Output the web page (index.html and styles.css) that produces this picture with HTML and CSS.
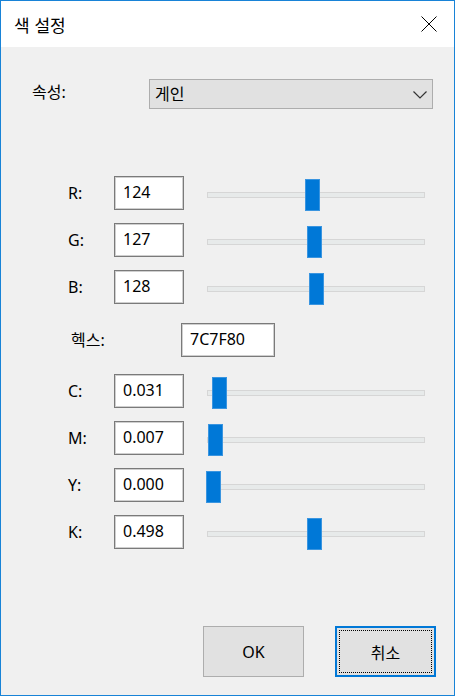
FILE: index.html
```html
<!DOCTYPE html>
<html lang="ko">
<head>
    <meta charset="UTF-8">
    <title>색 설정</title>
    <link rel="stylesheet" href="styles.css">
</head>
<body>
    <div class="dialog">
        <div class="titlebar">
            <span class="title">색 설정</span>
            <svg class="close" width="16" height="16" viewBox="0 0 16 16">
                <path d="M0.5 0.5 L15.5 15.5 M15.5 0.5 L0.5 15.5" stroke="#000" stroke-width="1" fill="none"/>
            </svg>
        </div>
        <div class="content">
            <div class="property-row">
                <label class="property-label">속성:</label>
                <div class="combo">
                    <span>게인</span>
                    <svg class="chevron" width="14" height="8" viewBox="0 0 14 8">
                        <path d="M0.5 0.5 L7 7 L13.5 0.5" stroke="#333" stroke-width="1.2" fill="none"/>
                    </svg>
                </div>
            </div>

            <div class="channels">
                <div class="row">
                    <label class="ch-label">R:</label>
                    <input class="field" type="text" value="124" readonly>
                    <div class="slider"><div class="track"></div><div class="thumb" style="left: 99px"></div></div>
                </div>
                <div class="row">
                    <label class="ch-label">G:</label>
                    <input class="field" type="text" value="127" readonly>
                    <div class="slider"><div class="track"></div><div class="thumb" style="left: 101px"></div></div>
                </div>
                <div class="row">
                    <label class="ch-label">B:</label>
                    <input class="field" type="text" value="128" readonly>
                    <div class="slider"><div class="track"></div><div class="thumb" style="left: 103px"></div></div>
                </div>

                <div class="row hex-row">
                    <label class="hex-label">헥스:</label>
                    <input class="field hex-field" type="text" value="7C7F80" readonly>
                </div>

                <div class="row cmyk-first">
                    <label class="ch-label">C:</label>
                    <input class="field" type="text" value="0.031" readonly>
                    <div class="slider"><div class="track"></div><div class="thumb" style="left: 6px"></div></div>
                </div>
                <div class="row">
                    <label class="ch-label">M:</label>
                    <input class="field" type="text" value="0.007" readonly>
                    <div class="slider"><div class="track"></div><div class="thumb" style="left: 2px"></div></div>
                </div>
                <div class="row">
                    <label class="ch-label">Y:</label>
                    <input class="field" type="text" value="0.000" readonly>
                    <div class="slider"><div class="track"></div><div class="thumb" style="left: 0px"></div></div>
                </div>
                <div class="row">
                    <label class="ch-label">K:</label>
                    <input class="field" type="text" value="0.498" readonly>
                    <div class="slider"><div class="track"></div><div class="thumb" style="left: 101px"></div></div>
                </div>
            </div>

            <div class="buttons">
                <button class="btn">OK</button>
                <button class="btn btn-focus"><span class="focus-rect">취소</span></button>
            </div>
        </div>
    </div>
</body>
</html>
```

FILE: styles.css
```css
body {
    margin: 0;
    font-family: "Noto Sans", "Noto Sans CJK KR", sans-serif;
    font-size: 16px;
    color: #000;
}
.dialog {
    box-sizing: border-box;
    width: 455px;
    height: 696px;
    border: 1px solid #1883d7;
    display: flex;
    flex-direction: column;
}
.titlebar {
    height: 46px;
    background: #fff;
    display: flex;
    align-items: center;
    justify-content: space-between;
    padding-left: 13px;
    padding-right: 17px;
}
.title {
    font-family: "Noto Sans CJK KR", sans-serif;
    font-size: 17px;
    line-height: 1;
}
.close {
    display: block;
}
.content {
    flex: 1;
    background: #f0f0f0;
    display: flex;
    flex-direction: column;
    padding-top: 32px;
}
.property-row {
    display: flex;
    align-items: flex-start;
    margin-left: 31px;
}
.property-label {
    width: 117px;
    padding-top: 3px;
    line-height: 20px;
}
.combo {
    box-sizing: border-box;
    width: 284px;
    height: 30px;
    background: #e1e1e1;
    border: 1px solid #adadad;
    display: flex;
    align-items: center;
    justify-content: space-between;
    padding-left: 5px;
    padding-right: 5px;
    line-height: 1;
}
.chevron {
    display: block;
    margin-top: 1px;
}
.channels {
    margin-left: 67px;
    margin-top: 67px;
}
.row {
    display: flex;
    align-items: center;
    height: 34px;
    margin-top: 13px;
}
.row:first-child {
    margin-top: 0;
}
.hex-row {
    margin-top: 19px;
}
.cmyk-first {
    margin-top: 17px;
}
.ch-label {
    width: 46px;
    line-height: 1;
}
.hex-label {
    width: 110px;
    padding-left: 3px;
    line-height: 1;
}
.field {
    box-sizing: border-box;
    width: 70px;
    height: 34px;
    margin: 0;
    border: 1px solid #7a7a7a;
    box-shadow: inset 0 0 0 1px #cfcfcf;
    background: #fff;
    font-family: inherit;
    font-size: 16px;
    color: #000;
    padding: 0 0 3px 8px;
    outline: none;
}
.hex-field {
    width: 94px;
}
.slider {
    position: relative;
    width: 219px;
    height: 34px;
    margin-left: 22px;
}
.track {
    position: absolute;
    left: 1px;
    right: 0;
    top: 16px;
    height: 6px;
    box-sizing: border-box;
    background: #e7eaea;
    border: 1px solid #d6d6d6;
}
.thumb {
    position: absolute;
    top: 3px;
    width: 15px;
    height: 32px;
    box-sizing: border-box;
    background: #0078d7;
    border: 1px solid #3a95e0;
}
.buttons {
    margin-top: auto;
    display: flex;
    justify-content: flex-end;
    gap: 31px;
    padding-right: 18px;
    padding-bottom: 18px;
}
.btn {
    box-sizing: border-box;
    width: 101px;
    height: 51px;
    background: #e1e1e1;
    border: 1px solid #adadad;
    font-family: inherit;
    font-size: 16px;
    color: #000;
    padding: 0;
}
.btn-focus {
    border: 2px solid #0078d7;
    padding: 2px;
}
.focus-rect {
    box-sizing: border-box;
    display: flex;
    align-items: center;
    justify-content: center;
    width: 100%;
    height: 100%;
    border: 1px dotted #000;
}
```
